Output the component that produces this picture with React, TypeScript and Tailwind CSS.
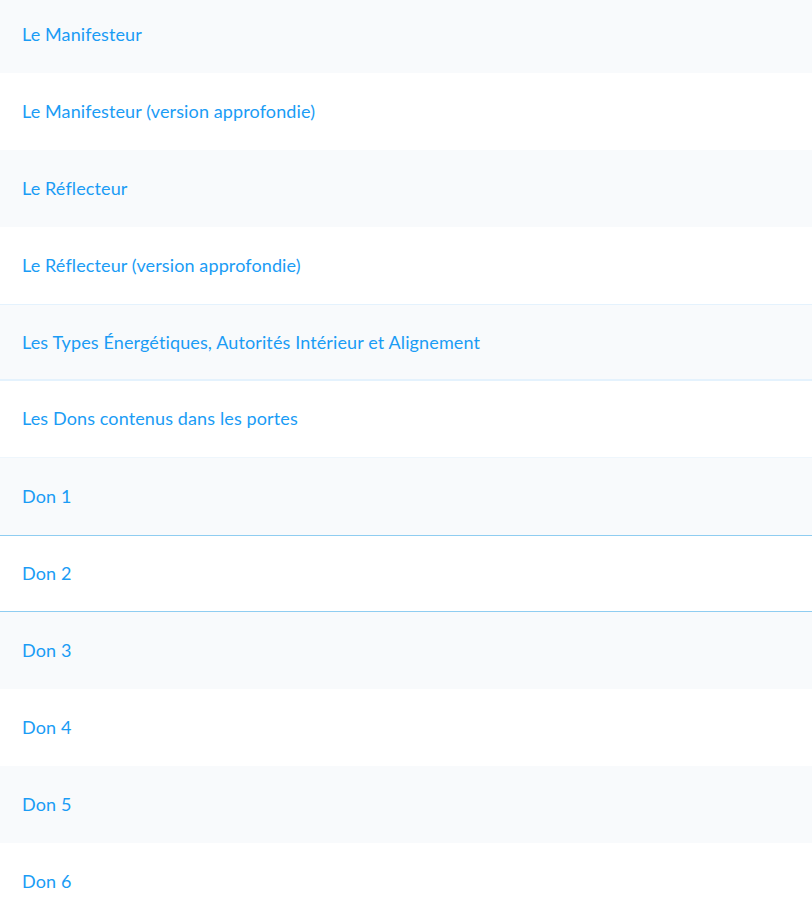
import React from "react";

type Row = { label: string; cls: string };

const rows: Row[] = [
  { label: "Le Manifesteur", cls: "h-[73px] pb-[5px] bg-[#f8fafc]" },
  { label: "Le Manifesteur (version approfondie)", cls: "h-[77px] pb-[2px] bg-white" },
  { label: "Le Réflecteur", cls: "h-[77px] pb-[2px] bg-[#f8fafc]" },
  { label: "Le Réflecteur (version approfondie)", cls: "h-[77px] pb-[2px] bg-white" },
  {
    label: "Les Types Énergétiques, Autorités Intérieur et Alignement",
    cls: "h-[77px] pb-[1px] bg-[#f8fafc] border-t border-b-2 border-[#e4f2fd]",
  },
  { label: "Les Dons contenus dans les portes", cls: "h-[77px] pb-[2px] bg-white border-b border-[#eef6fc]" },
  { label: "Don 1", cls: "h-[77px] pb-[2px] bg-[#f8fafc]" },
  { label: "Don 2", cls: "h-[77px] pb-[1px] bg-white border-t border-b border-[#8fcdf1]" },
  { label: "Don 3", cls: "h-[77px] pb-[2px] bg-[#f8fafc]" },
  { label: "Don 4", cls: "h-[77px] pb-[2px] bg-white" },
  { label: "Don 5", cls: "h-[77px] pb-[2px] bg-[#f8fafc]" },
  { label: "Don 6", cls: "h-[77px] pb-[2px] bg-white" },
];

export default function App() {
  return (
    <div className="w-[812px] h-[899px] overflow-hidden bg-white" style={{ fontFamily: "Lato, 'Open Sans', sans-serif" }}>
      <ul className="flex flex-col">
        {rows.map((r) => (
          <li key={r.label} className={`flex items-center px-[22px] ${r.cls}`}>
            <span className="text-[18px] tracking-[0.12px] text-[#1a9cf5] leading-none">{r.label}</span>
          </li>
        ))}
      </ul>
    </div>
  );
}
